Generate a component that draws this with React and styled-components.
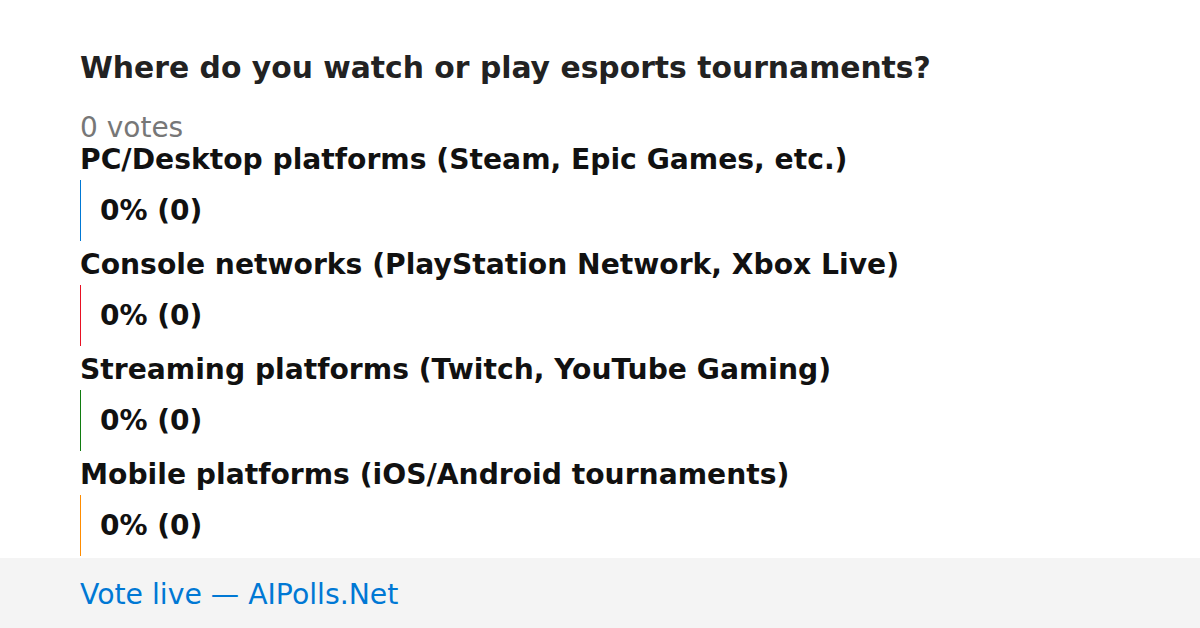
import React from 'react'
import styled, { createGlobalStyle } from 'styled-components'

const GlobalStyle = createGlobalStyle`
    html, body {
        margin: 0;
        padding: 0;
        background: #ffffff;
    }

    body {
        font-family: 'DejaVu Sans', 'Liberation Sans', sans-serif;
    }
`

const Page = styled.div`
    width: 100%;
    height: 100vh;
    display: flex;
    flex-direction: column;
    overflow: hidden;
`

const Main = styled.main`
    flex: 1;
    min-height: 0;
    overflow: hidden;
    padding: 50px 80px 0;
`

const Question = styled.h1`
    margin: 0 0 27px;
    font-size: 29.8px;
    line-height: 35px;
    font-weight: 700;
    color: #222222;
`

const Votes = styled.div`
    font-size: 28px;
    line-height: 32px;
    color: #777777;
`

const Option = styled.div`
    margin-bottom: 8px;
`

const Label = styled.div`
    font-size: 28.2px;
    line-height: 32px;
    font-weight: 700;
    color: #111111;
    margin-bottom: 4px;
`

const Bar = styled.div`
    height: 61px;
    display: flex;
    align-items: center;
    padding-left: 19px;
    border-left: 1px solid ${props => props.color};
    font-size: 28px;
    line-height: 32px;
    font-weight: 700;
    color: #111111;
`

const Footer = styled.footer`
    flex: 0 0 70px;
    box-sizing: border-box;
    display: flex;
    align-items: center;
    padding: 4px 80px 0;
    background: #f4f4f4;
    font-size: 28.3px;
    line-height: 32px;
    color: #0078d4;
`

const options = [
    { label: 'PC/Desktop platforms (Steam, Epic Games, etc.)', color: '#0078d4' },
    { label: 'Console networks (PlayStation Network, Xbox Live)', color: '#e81123' },
    { label: 'Streaming platforms (Twitch, YouTube Gaming)', color: '#107c10' },
    { label: 'Mobile platforms (iOS/Android tournaments)', color: '#ff8c00' },
]

const App = () => {
    return (
        <Page>
            <GlobalStyle />
            <Main>
                <Question>Where do you watch or play esports tournaments?</Question>
                <Votes>0 votes</Votes>
                {options.map(option => (
                    <Option key={option.label}>
                        <Label>{option.label}</Label>
                        <Bar color={option.color}>0% (0)</Bar>
                    </Option>
                ))}
            </Main>
            <Footer>Vote live — AIPolls.Net</Footer>
        </Page>
    )
}

export default App
